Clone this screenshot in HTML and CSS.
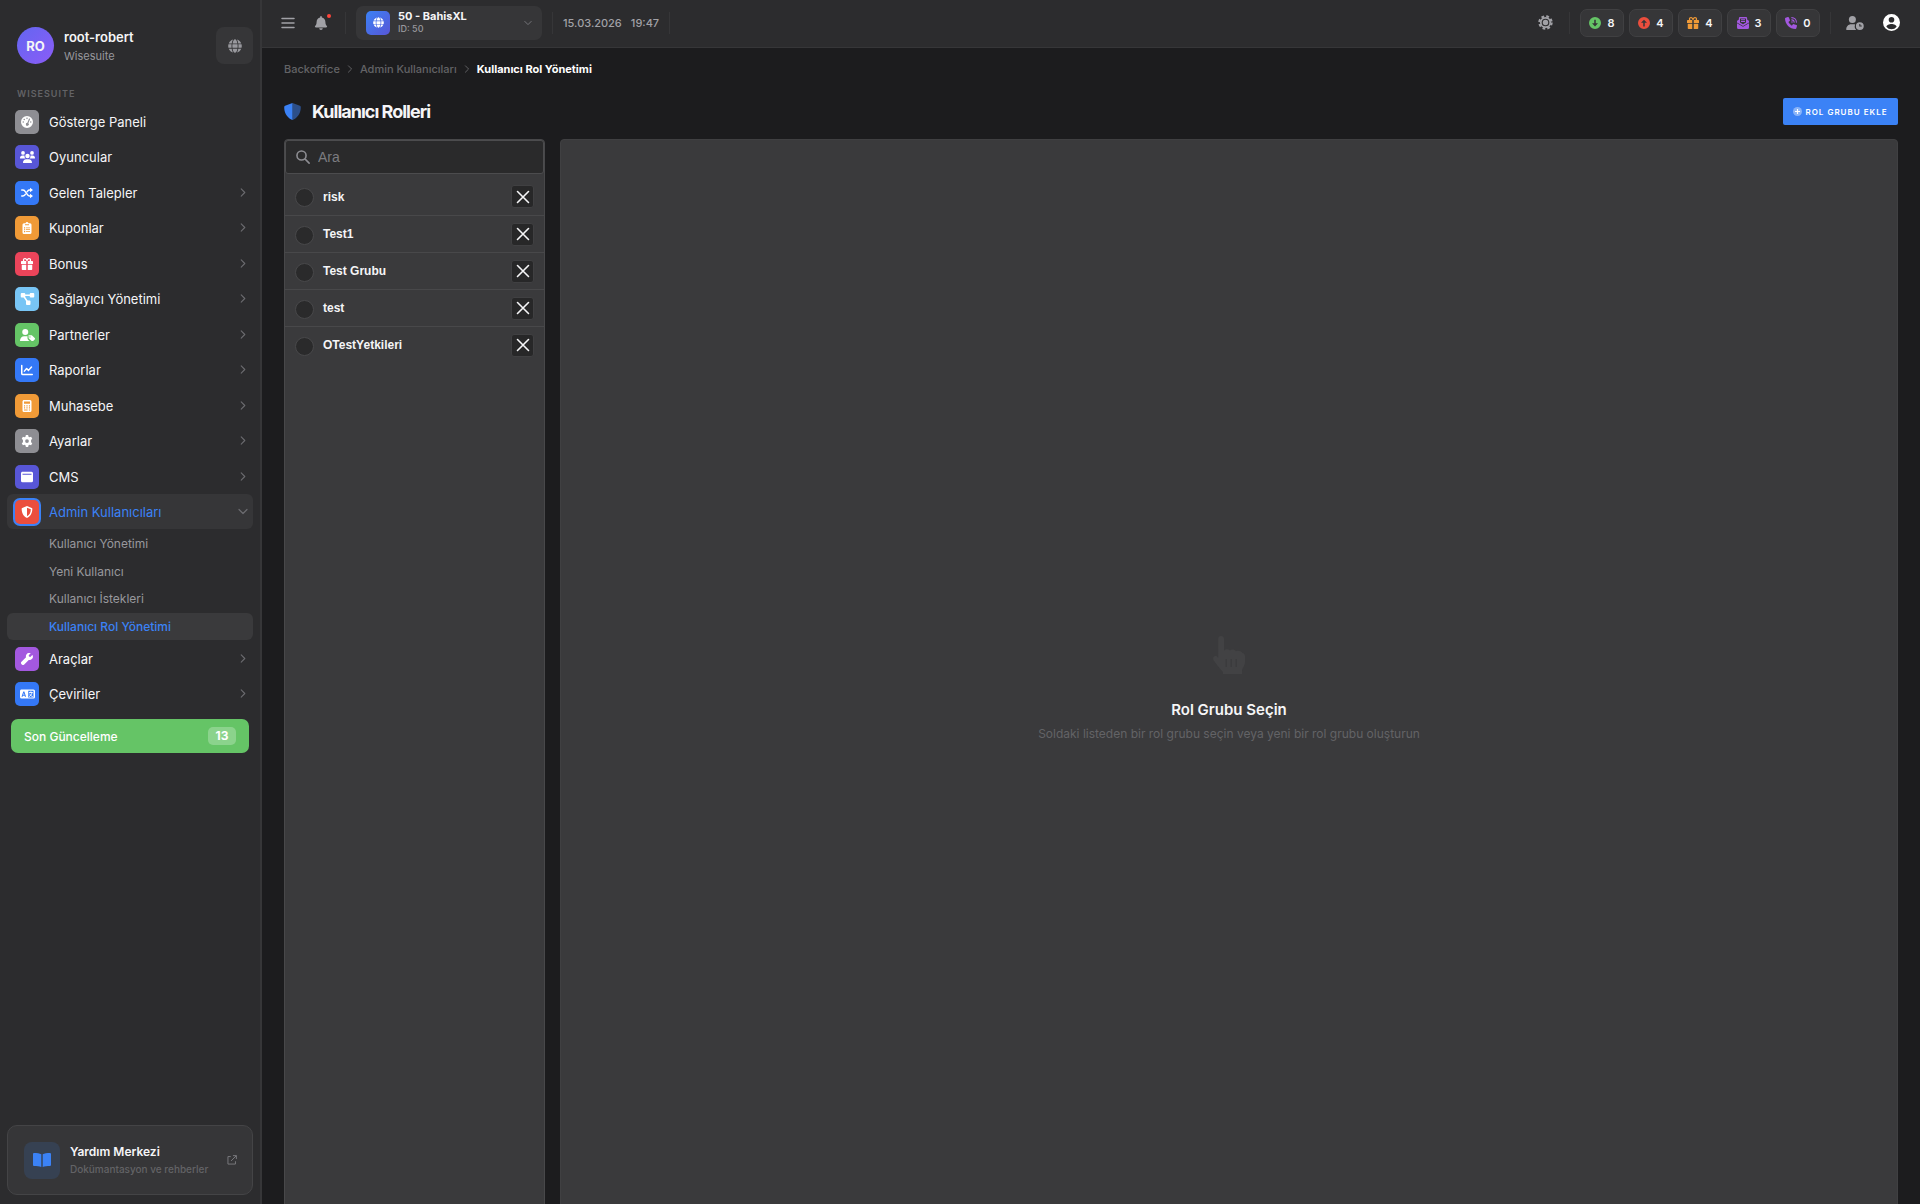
FILE: index.html
```html
<!DOCTYPE html>
<html lang="tr">
<head>
    <meta charset="UTF-8">
    <meta name="viewport" content="width=device-width, initial-scale=1.0">
    <title>Kullanıcı Rol Yönetimi</title>
    <link rel="stylesheet" href="styles.css">
</head>
<body>
    <!-- Icon sprite -->
    <svg class="sprite" aria-hidden="true">
        <symbol id="i-globe" viewBox="0 0 496 512"><path d="M336.5 160C322 70.7 287.8 8 248 8s-74 62.7-88.5 152h177zM152 256c0 22.2 1.2 43.5 3.3 64h185.3c2.1-20.5 3.3-41.8 3.3-64s-1.2-43.5-3.3-64H155.3c-2.1 20.5-3.3 41.8-3.3 64zm324.7-96c-28.6-67.9-86.5-120.4-158-141.6 24.4 33.8 41.2 84.7 50 141.6h108zM177.2 18.4C105.8 39.6 47.8 92.1 19.3 160h108c8.7-56.9 25.5-107.8 49.9-141.6zM487.4 192H372.7c2.1 21 3.3 42.5 3.3 64s-1.2 43-3.3 64h114.6c5.5-20.5 8.6-41.8 8.6-64s-3.1-43.5-8.5-64zM120 256c0-21.5 1.2-43 3.3-64H8.6C3.2 212.5 0 233.8 0 256s3.2 43.5 8.6 64h114.6c-2-21-3.2-42.5-3.2-64zm39.5 96c14.5 89.3 48.7 152 88.5 152s74-62.7 88.5-152h-177zm159.3 141.6c71.4-21.2 129.4-73.7 158-141.6h-108c-8.8 56.9-25.6 107.8-50 141.6zM19.3 352c28.6 67.9 86.5 120.4 158 141.6-24.4-33.8-41.2-84.7-50-141.6h-108z"/></symbol>
        <symbol id="i-bell" viewBox="0 0 448 512"><path d="M224 512c35.32 0 63.97-28.65 63.97-64H160.03c0 35.35 28.65 64 63.97 64zm215.39-149.71c-19.32-20.76-55.47-51.99-55.47-154.29 0-77.7-54.48-139.9-127.94-155.16V32c0-17.67-14.32-32-31.98-32s-31.98 14.33-31.98 32v20.84C118.56 68.1 64.08 130.3 64.08 208c0 102.3-36.15 133.53-55.47 154.29-6 6.45-8.66 14.16-8.61 21.71.11 16.4 12.98 32 32.1 32h383.8c19.12 0 32-15.6 32.1-32 .05-7.55-2.61-15.27-8.61-21.71z"/></symbol>
        <symbol id="i-gauge" viewBox="0 0 16 16"><path fill-rule="evenodd" d="M8 0a8 8 0 1 1 0 16A8 8 0 0 1 8 0zM8 2a1 1 0 1 0 0 2 1 1 0 0 0 0-2zM4.300 3.600a1 1 0 1 0 0 2 1 1 0 0 0 0-2zM3 7a1 1 0 1 0 0 2 1 1 0 0 0 0-2zM13 7a1 1 0 1 0 0 2 1 1 0 0 0 0-2zM10.600 3.700 8.500 9.100a2 2 0 1 0 1.300.5L12 4.300a.7.7 0 0 0-1.400-.6z"/></symbol>
        <symbol id="i-users" viewBox="0 0 20 16"><circle cx="4" cy="2.500" r="2.500"/><circle cx="16" cy="2.500" r="2.500"/><circle cx="10" cy="6.500" r="3"/><path d="M0 9.300C0 7.400 1.300 6 3 6h2c.4 0 .8.100 1.100.2A4 4 0 0 0 7.300 10H.7a.7.7 0 0 1-.7-.7zM20 9.300C20 7.400 18.700 6 17 6h-2c-.4 0-.8.100-1.100.2A4 4 0 0 1 12.700 10h6.600c.4 0 .7-.3.7-.7zM4 15.200C4 12.900 5.800 11 8.200 11h3.600c2.400 0 4.200 1.900 4.200 4.200 0 .5-.4.800-.8.800H4.800c-.4 0-.8-.3-.8-.8z"/></symbol>
        <symbol id="i-shuffle" viewBox="0 0 16 16"><path fill="none" stroke="currentColor" stroke-width="2" stroke-linecap="round" d="M1 4h1.500c1.200 0 2 .500 2.700 1.500l3.600 5C9.500 11.500 10.300 12 11.500 12H13M1 12h1.500c1.200 0 2-.5 2.700-1.500l.5-.7M8.300 6.200l.5-.7C9.500 4.500 10.300 4 11.500 4H13"/><path d="M12 1l4 3-4 3zM12 9l4 3-4 3z"/></symbol>
        <symbol id="i-clipboard" viewBox="0 0 12 16"><path fill-rule="evenodd" d="M6 0a2 2 0 0 1 1.900 1.500H10A2 2 0 0 1 12 3.500V14a2 2 0 0 1-2 2H2a2 2 0 0 1-2-2V3.500a2 2 0 0 1 2-2h2.100A2 2 0 0 1 6 0zM3.300 3v1.300h5.400V3zM2 7v1.500h1.500V7zm2.500.2v1H10v-1zM2 9.500V11h1.500V9.500zm2.500.3v1H10v-1zM2 12v1.500h1.500V12zm2.500.3v1H10v-1z"/></symbol>
        <symbol id="i-gift" viewBox="0 0 16 16"><path fill-rule="evenodd" d="M2.700 4H1a1 1 0 0 0-1 1v3h7V4h2v4h7V5a1 1 0 0 0-1-1h-1.700c.2-.4.200-.8.200-1.200C13.500 1.200 12.300 0 10.700 0 9.600 0 8.700.6 8 1.600 7.300.6 6.400 0 5.300 0 3.700 0 2.500 1.200 2.500 2.800c0 .4 0 .8.200 1.200zM5.400 1.500c.8 0 1.300.6 2 2.500H5.200C4.500 4 4 3.500 4 2.800s.6-1.300 1.400-1.300zm5.200 0c.8 0 1.400.6 1.400 1.300S11.500 4 10.800 4H8.600c.7-1.900 1.200-2.500 2-2.500zM1 9v6a1 1 0 0 0 1 1h5V9zm8 0v7h5a1 1 0 0 0 1-1V9z"/></symbol>
        <symbol id="i-nodes" viewBox="0 0 18 16"><rect width="6" height="6" rx="1.200"/><rect x="12" width="6" height="6" rx="1.200"/><rect x="7" y="10" width="6" height="6" rx="1.200"/><path fill="none" stroke="currentColor" stroke-width="2" d="M4 3h10M4.500 5l4 6"/></symbol>
        <symbol id="i-user-tag" viewBox="0 0 20 16"><circle cx="7" cy="4" r="4"/><path d="M0 15.300C0 12 2.500 9.500 5.500 9.500h3c.5 0 1 .1 1.500.2v2.500c0 .8.300 1.500.8 2l1.800 1.800H.7a.7.7 0 0 1-.7-.7z"/><path fill-rule="evenodd" d="M11 8.200h4c.4 0 .8.200 1.100.4l3.500 3.500c.6.600.6 1.400 0 2L17.500 16c-.6.600-1.400.6-2 0L12 12.600c-.3-.3-.5-.7-.5-1.100V9zM13.300 9.700a.8.8 0 1 0 0 1.600.8.8 0 0 0 0-1.600z"/></symbol>
        <symbol id="i-user-clock" viewBox="0 0 20 16"><circle cx="7" cy="4" r="4"/><path d="M0 15.300C0 12 2.500 9.500 5.500 9.500h3c.6 0 1.200.1 1.700.3a5.500 5.500 0 0 0 1.300 6.200H.7a.7.7 0 0 1-.7-.7z"/><path fill-rule="evenodd" d="M15.500 7a4.500 4.500 0 1 1 0 9 4.500 4.500 0 0 1 0-9zm-.6 2v3h2.800v-1.100h-1.600V9z"/></symbol>
        <symbol id="i-chart" viewBox="0 0 16 16"><path fill="none" stroke="currentColor" stroke-width="2" stroke-linecap="round" stroke-linejoin="round" d="M1 2v10.500c0 .8.700 1.500 1.500 1.500H15M4.500 9.500l3-3.500 2.500 2.500L14 4"/></symbol>
        <symbol id="i-calc" viewBox="0 0 12 16"><path fill-rule="evenodd" d="M2 0h8a2 2 0 0 1 2 2v12a2 2 0 0 1-2 2H2a2 2 0 0 1-2-2V2C0 .9.900 0 2 0zm0 2v3h8V2zM2 7v1.500h1.500V7zm3.200 0v1.500h1.600V7zm3.300 0v1.500H10V7zM2 9.800v1.500h1.500V9.800zm3.200 0v1.500h1.600V9.800zm3.300 0v1.500H10V9.800zM2 12.500V14h4.800v-1.500zm6.500 0V14H10v-1.500z"/></symbol>
        <symbol id="i-gear" viewBox="0 0 16 16"><path fill-rule="evenodd" d="M6.500 0h3l.5 2.200 1.300.8 2.200-.7 1.500 2.600-1.600 1.600v3l1.600 1.600-1.500 2.600-2.200-.7-1.300.8-.5 2.200h-3L6 13.800 4.700 13l-2.200.7L1 11.100l1.600-1.600v-3L1 4.900l1.500-2.600 2.200.7L6 2.200zM8 5.500a2.500 2.500 0 1 0 0 5 2.500 2.500 0 0 0 0-5z"/></symbol>
        <symbol id="i-window" viewBox="0 0 16 16"><path fill-rule="evenodd" d="M2 1h12a2 2 0 0 1 2 2v10a2 2 0 0 1-2 2H2a2 2 0 0 1-2-2V3c0-1.100.900-2 2-2zm0 2.500V5h12V3.500z"/></symbol>
        <symbol id="i-shield" viewBox="0 0 16 16"><path fill-rule="evenodd" d="M8 0l6.300 2.500c.5.200.8.700.8 1.200 0 4.600-1.500 9.500-6.500 12.100-.4.200-.8.200-1.200 0C2.400 13.200.9 8.300.9 3.700c0-.5.300-1 .8-1.200zM8 2.200v11.600c3.600-2 5-5.600 5.100-9.600z"/></symbol>
        <symbol id="i-wrench" viewBox="0 0 16 16"><path d="M15.600 3.200a.5.5 0 0 0-.9-.2L12.500 5.200 10.600 4.800 10.300 3l2.300-2.200a.5.5 0 0 0-.3-.8 4.600 4.600 0 0 0-5.600 5.800L.7 11.700a2.200 2.200 0 0 0 0 3.200l.4.400a2.200 2.200 0 0 0 3.200 0l6-6a4.600 4.600 0 0 0 5.300-6.100z"/></symbol>
        <symbol id="i-language" viewBox="0 0 20 16"><path fill-rule="evenodd" d="M2 2h16a2 2 0 0 1 2 2v8a2 2 0 0 1-2 2H2a2 2 0 0 1-2-2V4c0-1.100.900-2 2-2zm9 1.500v9h7v-9zM4.400 4.800 2 11.500h1.500l.4-1.300h2.300l.4 1.300h1.500L5.800 4.800zm.7 1.800.8 2.300H4.300z"/><path fill="none" stroke="currentColor" stroke-width="1.200" d="M12 6h5M14.500 4.500V6M16 6c-.5 2.500-2 4.500-4 5.500M13 7.500c.7 2 2 3.500 4 4"/></symbol>
        <symbol id="i-book" viewBox="0 0 18 14"><path d="M8.300 1.200C6.800.4 4 0 .9 0 .4 0 0 .4 0 .9v11.200c0 .5.400.9.900.9 3 0 5.600.2 7.400 1zM9.700 1.200C11.200.4 14 0 17.100 0c.5 0 .9.400.9.900v11.200c0 .5-.4.900-.9.900-3 0-5.600.2-7.400 1z"/></symbol>
        <symbol id="i-external" viewBox="0 0 16 16"><path fill="none" stroke="currentColor" stroke-width="1.600" d="M6 2.500H1.500v12h12V10M9.500 1H15v5.500M15 1 6.500 9.500"/></symbol>
        <symbol id="i-menu" viewBox="0 0 14 12"><path fill="none" stroke="currentColor" stroke-width="1.500" stroke-linecap="round" d="M1 1.500h12M1 6h12M1 10.500h12"/></symbol>
        <symbol id="i-right" viewBox="0 0 6 10"><path fill="none" stroke="currentColor" stroke-width="1.200" stroke-linecap="round" stroke-linejoin="round" d="M1 1l4 4-4 4"/></symbol>
        <symbol id="i-down" viewBox="0 0 10 6"><path fill="none" stroke="currentColor" stroke-width="1.200" stroke-linecap="round" stroke-linejoin="round" d="M1 1l4 4 4-4"/></symbol>
        <symbol id="i-sun" viewBox="0 0 16 16"><circle cx="8" cy="8" r="6.500" fill="none" stroke="currentColor" stroke-width="2.400" stroke-dasharray="2.900 2.205"/><circle cx="8" cy="8" r="5" fill="none" stroke="currentColor" stroke-width="1.800"/><circle cx="8" cy="8" r="2.900"/></symbol>
        <symbol id="i-circle-down" viewBox="0 0 16 16"><path fill-rule="evenodd" d="M8 0a8 8 0 1 1 0 16A8 8 0 0 1 8 0zM7 3.500v4.800H4l4 4.200 4-4.200H9V3.500z"/></symbol>
        <symbol id="i-circle-up" viewBox="0 0 16 16"><path fill-rule="evenodd" d="M8 0a8 8 0 1 1 0 16A8 8 0 0 1 8 0zM7 12.500V7.700H4l4-4.200 4 4.200H9v4.800z"/></symbol>
        <symbol id="i-mail" viewBox="0 0 16 16"><path fill-rule="evenodd" d="M4 0h8a1.500 1.500 0 0 1 1.500 1.500v1.700L15.400 4.500c.4.300.6.700.6 1.200v1.500L8 12 0 7.200v-1.500c0-.5.200-.9.600-1.200l1.900-1.300V1.500A1.500 1.500 0 0 1 4 0zm0 2v5.200L8 9.600l4-2.400V2zm1.300 1h5.400v1.200H5.300zm0 2.300h5.400v1.200H5.300z"/><path d="M0 8.200l8 4.900 8-4.900V14a2 2 0 0 1-2 2H2a2 2 0 0 1-2-2z"/></symbol>
        <symbol id="i-phone" viewBox="0 0 16 16"><path d="M5.200.8a1.200 1.200 0 0 0-1.500-.7L.9.900C.4 1 0 1.500 0 2c0 7.700 6.300 14 14 14 .5 0 1-.4 1.100-.9l.8-2.800a1.200 1.200 0 0 0-.7-1.500l-3.300-1.300a1.200 1.200 0 0 0-1.400.3L9.200 11.500A10.500 10.500 0 0 1 4.500 6.800l1.700-1.400c.4-.3.500-.9.300-1.300z"/><path fill="none" stroke="currentColor" stroke-width="1.400" stroke-linecap="round" d="M9 .8A6.200 6.200 0 0 1 15.200 7M9 3.800A3.200 3.200 0 0 1 12.200 7"/><circle cx="9.300" cy="6.700" r="1"/></symbol>
        <symbol id="i-account" viewBox="0 0 20 20"><path fill-rule="evenodd" d="M10 0a10 10 0 1 1 0 20 10 10 0 0 1 0-20zm0 3.500a3.300 3.300 0 1 0 0 6.600 3.300 3.300 0 0 0 0-6.600zM10 11.800c-2.800 0-6 1.500-6 3.200a7.500 7.500 0 0 0 12 0c0-1.700-3.200-3.200-6-3.200z"/></symbol>
        <symbol id="i-duo-shield" viewBox="0 0 16 16"><path d="M8 0v16c-.2 0-.4 0-.6-.2C2 13 .2 8.500.2 3.700c0-.5.300-1 .8-1.200z"/><path opacity=".5" d="M8 0v16c.2 0 .4 0 .6-.2 5.400-2.800 7.200-7.300 7.200-12.100 0-.5-.3-1-.8-1.200z"/></symbol>
        <symbol id="i-plus" viewBox="0 0 16 16"><circle cx="8" cy="8" r="8" opacity=".4"/><path d="M7 3.500h2V7h3.500v2H9v3.500H7V9H3.500V7H7z"/></symbol>
        <symbol id="i-search" viewBox="0 0 16 16"><path fill="none" stroke="currentColor" stroke-width="1.800" stroke-linecap="round" d="M10.200 10.200 15 15M11.500 6.300a5.200 5.200 0 1 1-10.400 0 5.200 5.200 0 0 1 10.400 0z"/></symbol>
        <symbol id="i-close" viewBox="0 0 14 14"><path fill="none" stroke="currentColor" stroke-width="1.600" stroke-linecap="round" d="M1.500 1.500l11 11M12.500 1.500l-11 11"/></symbol>
        <symbol id="i-hand" viewBox="0 0 32 38"><path fill-rule="evenodd" d="M8 0c1.800 0 3 1.300 3 3v12c1-2 4-2.500 6-.5 1.600-1.600 4.500-1.400 6 .8 2-1 5-.3 6.500 1.700 1.600.3 2.500 1.500 2.500 3.500V26c0 4-3 6-3 9v3H10v-2c-3-3-6-7-9.300-11.500C-.8 22 1 19 4 20.500L5.200 22V3C5.200 1.300 6.300 0 8 0zm4.500 23v8h1.300v-8zm5 0v8h1.300v-8zm5 0v8h1.300v-8z"/></symbol>
    </svg>

    <div class="layout">
        <aside class="sidebar">
            <div class="profile">
                <div class="avatar">RO</div>
                <div class="profile-text">
                    <strong>root-robert</strong>
                    <span>Wisesuite</span>
                </div>
                <button type="button" class="lang-btn" aria-label="Dil"><svg width="14" height="14"><use href="#i-globe"/></svg></button>
            </div>

            <div class="nav-title">WISESUITE</div>
            <nav>
                <ul class="nav">
                    <li><a href="#"><span class="nav-icon gray"><svg><use href="#i-gauge"/></svg></span>Gösterge Paneli</a></li>
                    <li><a href="#"><span class="nav-icon indigo"><svg class="wide"><use href="#i-users"/></svg></span>Oyuncular</a></li>
                    <li><a href="#"><span class="nav-icon blue"><svg><use href="#i-shuffle"/></svg></span>Gelen Talepler<svg class="arrow"><use href="#i-right"/></svg></a></li>
                    <li><a href="#"><span class="nav-icon orange"><svg><use href="#i-clipboard"/></svg></span>Kuponlar<svg class="arrow"><use href="#i-right"/></svg></a></li>
                    <li><a href="#"><span class="nav-icon pink"><svg><use href="#i-gift"/></svg></span>Bonus<svg class="arrow"><use href="#i-right"/></svg></a></li>
                    <li><a href="#"><span class="nav-icon sky"><svg class="wide"><use href="#i-nodes"/></svg></span>Sağlayıcı Yönetimi<svg class="arrow"><use href="#i-right"/></svg></a></li>
                    <li><a href="#"><span class="nav-icon green"><svg class="wide"><use href="#i-user-tag"/></svg></span>Partnerler<svg class="arrow"><use href="#i-right"/></svg></a></li>
                    <li><a href="#"><span class="nav-icon blue"><svg><use href="#i-chart"/></svg></span>Raporlar<svg class="arrow"><use href="#i-right"/></svg></a></li>
                    <li><a href="#"><span class="nav-icon orange"><svg><use href="#i-calc"/></svg></span>Muhasebe<svg class="arrow"><use href="#i-right"/></svg></a></li>
                    <li><a href="#"><span class="nav-icon gray"><svg><use href="#i-gear"/></svg></span>Ayarlar<svg class="arrow"><use href="#i-right"/></svg></a></li>
                    <li><a href="#"><span class="nav-icon indigo"><svg><use href="#i-window"/></svg></span>CMS<svg class="arrow"><use href="#i-right"/></svg></a></li>
                    <li>
                        <a href="#" class="active"><span class="nav-icon red"><svg><use href="#i-shield"/></svg></span>Admin Kullanıcıları<svg class="arrow"><use href="#i-down"/></svg></a>
                        <ul class="subnav">
                            <li><a href="#">Kullanıcı Yönetimi</a></li>
                            <li><a href="#">Yeni Kullanıcı</a></li>
                            <li><a href="#">Kullanıcı İstekleri</a></li>
                            <li><a href="#" class="current">Kullanıcı Rol Yönetimi</a></li>
                        </ul>
                    </li>
                    <li><a href="#"><span class="nav-icon purple"><svg><use href="#i-wrench"/></svg></span>Araçlar<svg class="arrow"><use href="#i-right"/></svg></a></li>
                    <li><a href="#"><span class="nav-icon blue"><svg class="wide"><use href="#i-language"/></svg></span>Çeviriler<svg class="arrow"><use href="#i-right"/></svg></a></li>
                </ul>
            </nav>
            <button type="button" class="update-btn">Son Güncelleme <span>13</span></button>

            <a href="#" class="help-card">
                <span class="help-icon"><svg width="20" height="14"><use href="#i-book"/></svg></span>
                <span class="help-text">
                    <strong>Yardım Merkezi</strong>
                    <small>Dokümantasyon ve rehberler</small>
                </span>
                <svg width="10" height="10"><use href="#i-external"/></svg>
            </a>
        </aside>

        <div class="content">
            <header class="topbar">
                <button type="button" class="icon-btn" aria-label="Menü"><svg width="14" height="12"><use href="#i-menu"/></svg></button>
                <button type="button" class="icon-btn bell" aria-label="Bildirimler"><svg width="14" height="14"><use href="#i-bell"/></svg></button>
                <span class="divider"></span>
                <button type="button" class="site-select" aria-haspopup="listbox">
                    <span class="site-icon"><svg width="11" height="11"><use href="#i-globe"/></svg></span>
                    <span class="site-text">
                        <strong>50 - BahisXL</strong>
                        <small>ID: 50</small>
                    </span>
                    <svg width="8" height="6"><use href="#i-down"/></svg>
                </button>
                <span class="divider"></span>
                <div class="clock"><span>15.03.2026</span><span>19:47</span></div>
                <span class="divider"></span>

                <div class="topbar-right">
                    <button type="button" class="icon-btn" aria-label="Tema"><svg width="15" height="15"><use href="#i-sun"/></svg></button>
                    <span class="divider"></span>
                    <div class="counters">
                        <button type="button" class="counter"><svg class="c-green"><use href="#i-circle-down"/></svg>8</button>
                        <button type="button" class="counter"><svg class="c-red"><use href="#i-circle-up"/></svg>4</button>
                        <button type="button" class="counter"><svg class="c-orange"><use href="#i-gift"/></svg>4</button>
                        <button type="button" class="counter"><svg class="c-purple"><use href="#i-mail"/></svg>3</button>
                        <button type="button" class="counter"><svg class="c-purple"><use href="#i-phone"/></svg>0</button>
                    </div>
                    <span class="divider"></span>
                    <button type="button" class="icon-btn" aria-label="Oturumlar"><svg width="18" height="14"><use href="#i-user-clock"/></svg></button>
                    <button type="button" class="icon-btn account" aria-label="Hesap"><svg width="17" height="17"><use href="#i-account"/></svg></button>
                </div>
            </header>

            <main class="page">
                <nav class="breadcrumb">
                    <a href="#">Backoffice</a>
                    <svg width="6" height="8"><use href="#i-right"/></svg>
                    <a href="#">Admin Kullanıcıları</a>
                    <svg width="6" height="8"><use href="#i-right"/></svg>
                    <span>Kullanıcı Rol Yönetimi</span>
                </nav>

                <div class="page-head">
                    <svg width="17" height="17"><use href="#i-duo-shield"/></svg>
                    <h1>Kullanıcı Rolleri</h1>
                    <button type="button" class="add-btn"><svg width="9" height="9"><use href="#i-plus"/></svg>ROL GRUBU EKLE</button>
                </div>

                <div class="panels">
                    <section class="role-list">
                        <label class="search">
                            <svg width="14" height="14"><use href="#i-search"/></svg>
                            <input type="text" placeholder="Ara" aria-label="Ara">
                        </label>
                        <ul>
                            <li><input type="radio" name="role" id="role1"><label for="role1">risk</label><button type="button" aria-label="Sil"><svg width="14" height="14"><use href="#i-close"/></svg></button></li>
                            <li><input type="radio" name="role" id="role2"><label for="role2">Test1</label><button type="button" aria-label="Sil"><svg width="14" height="14"><use href="#i-close"/></svg></button></li>
                            <li><input type="radio" name="role" id="role3"><label for="role3">Test Grubu</label><button type="button" aria-label="Sil"><svg width="14" height="14"><use href="#i-close"/></svg></button></li>
                            <li><input type="radio" name="role" id="role4"><label for="role4">test</label><button type="button" aria-label="Sil"><svg width="14" height="14"><use href="#i-close"/></svg></button></li>
                            <li><input type="radio" name="role" id="role5"><label for="role5">OTestYetkileri</label><button type="button" aria-label="Sil"><svg width="14" height="14"><use href="#i-close"/></svg></button></li>
                        </ul>
                    </section>

                    <section class="role-detail">
                        <svg width="32" height="38"><use href="#i-hand"/></svg>
                        <h2>Rol Grubu Seçin</h2>
                        <p>Soldaki listeden bir rol grubu seçin veya yeni bir rol grubu oluşturun</p>
                    </section>
                </div>
            </main>
        </div>
    </div>
</body>
</html>
```

FILE: styles.css
```css
* {
    margin: 0;
    padding: 0;
    box-sizing: border-box;
}

body {
    font-family: Inter, "Liberation Sans", sans-serif;
    font-size: 13px;
    background: #1c1c1e;
    color: #f5f5f7;
}

ul {
    list-style: none;
}

a {
    color: inherit;
    text-decoration: none;
}

button,
input {
    font-family: inherit;
    color: inherit;
    border: none;
    background: none;
}

button {
    cursor: pointer;
}

svg {
    display: block;
    flex-shrink: 0;
    fill: currentColor;
}

.sprite {
    display: none;
}

.layout {
    display: flex;
    height: 100vh;
    overflow: hidden;
}

/* Sidebar */
.sidebar {
    display: flex;
    flex-direction: column;
    flex-shrink: 0;
    width: 262px;
    padding: 27px 7px 9px;
    background: #2c2c2e;
    border-right: 2px solid #363638;
}

.profile {
    display: flex;
    align-items: center;
    gap: 10px;
    padding-left: 10px;
}

.avatar {
    display: flex;
    align-items: center;
    justify-content: center;
    width: 37px;
    height: 37px;
    border-radius: 50%;
    background: linear-gradient(135deg, #6366f1, #8b5cf6);
    font-size: 13px;
    font-weight: 700;
}

.profile-text {
    display: flex;
    flex-direction: column;
    gap: 2px;
    flex: 1;
    padding-top: 2px;
}

.profile-text strong {
    font-size: 13px;
    font-weight: 600;
    line-height: 17px;
}

.profile-text span {
    font-size: 11px;
    line-height: 16px;
    color: #98989d;
}

.lang-btn {
    display: flex;
    align-items: center;
    justify-content: center;
    width: 37px;
    height: 37px;
    border-radius: 8px;
    background: #363638;
    color: #98989d;
}

.nav-title {
    margin-top: 22px;
    padding-left: 10px;
    font-size: 9px;
    font-weight: 600;
    line-height: 15px;
    letter-spacing: 1px;
    color: #636366;
}

.nav {
    margin-top: 3px;
}

.nav > li:nth-child(even) {
    padding-bottom: 1px;
}

.nav > li > a {
    display: flex;
    align-items: center;
    gap: 10px;
    height: 35px;
    padding: 0 5px 0 8px;
    border-radius: 6px;
    font-size: 13px;
}

.nav > li > a.active {
    background: #363638;
    color: #3b82f6;
}

.nav-icon {
    display: flex;
    align-items: center;
    justify-content: center;
    width: 24px;
    height: 24px;
    border-radius: 5px;
    color: #fff;
}

.nav-icon svg {
    width: 12px;
    height: 12px;
}

.nav-icon svg.wide {
    width: 15px;
}

.active .nav-icon {
    box-shadow: 0 0 0 2px #3b82f6;
}

.gray { background: #8e8e93; }
.indigo { background: #5856d6; }
.blue { background: #3478f6; }
.orange { background: #f09a37; }
.pink { background: #eb445a; }
.sky { background: #78c5f5; }
.green { background: #65c466; }
.red { background: #eb4e3d; }
.purple { background: #a358df; }

.arrow {
    width: 10px;
    height: 9px;
    margin-left: auto;
    color: #6c6c70;
}

.subnav {
    padding-top: 1px;
}

.subnav li:nth-child(odd) {
    padding-bottom: 1px;
}

.subnav a {
    display: block;
    padding-left: 42px;
    border-radius: 6px;
    font-size: 12px;
    line-height: 27px;
    color: #98989d;
}

.subnav a.current {
    background: #3a3a3c;
    font-weight: 500;
    color: #3b82f6;
}

.update-btn {
    display: flex;
    align-items: center;
    justify-content: space-between;
    height: 34px;
    margin: 7px 4px 0;
    padding: 0 13px;
    border-radius: 7px;
    background: #65c466;
    font-size: 12px;
    font-weight: 500;
    color: #fff;
}

.update-btn span {
    width: 28px;
    border-radius: 5px;
    background: rgba(255, 255, 255, 0.25);
    font-size: 12px;
    font-weight: 700;
    line-height: 18px;
}

.help-card {
    display: flex;
    align-items: center;
    height: 70px;
    margin-top: auto;
    padding: 0 15px 0 16px;
    border: 1px solid #444446;
    border-radius: 10px;
    background: #363638;
    color: #77777b;
}

.help-icon {
    display: flex;
    align-items: center;
    justify-content: center;
    width: 36px;
    height: 37px;
    border-radius: 8px;
    background: #364152;
    color: #3b82f6;
}

.help-text {
    display: flex;
    flex-direction: column;
    flex: 1;
    padding-left: 10px;
}

.help-text strong {
    font-size: 12px;
    font-weight: 600;
    line-height: 19px;
    color: #f5f5f7;
}

.help-text small {
    font-size: 10px;
    font-weight: 500;
    line-height: 17px;
    color: #636366;
}

/* Topbar */
.content {
    display: flex;
    flex-direction: column;
    flex: 1;
    min-width: 0;
}

.topbar {
    display: flex;
    align-items: center;
    flex-shrink: 0;
    height: 48px;
    padding: 0 15px 2px 12px;
    background: #2c2c2e;
    border-bottom: 1px solid #363638;
}

.icon-btn {
    display: flex;
    align-items: center;
    justify-content: center;
    width: 28px;
    height: 28px;
    color: #a1a1a6;
}

.bell {
    position: relative;
    margin-left: 5px;
}

.bell::after {
    content: "";
    position: absolute;
    top: 5px;
    right: 4px;
    width: 4px;
    height: 4px;
    border-radius: 50%;
    background: #ff453a;
}

.divider {
    width: 1px;
    height: 22px;
    margin: 0 10px;
    background: #363638;
}

.site-select {
    display: flex;
    align-items: center;
    gap: 8px;
    width: 186px;
    height: 34px;
    padding: 0 10px;
    border-radius: 7px;
    background: #363638;
    text-align: left;
    color: #77777b;
}

.site-icon {
    display: flex;
    align-items: center;
    justify-content: center;
    width: 24px;
    height: 24px;
    border-radius: 5px;
    background: linear-gradient(135deg, #3b82f6, #5856d6);
    color: #fff;
}

.site-text {
    display: flex;
    flex-direction: column;
    flex: 1;
}

.site-text strong {
    font-size: 11px;
    font-weight: 700;
    line-height: 13px;
    color: #f5f5f7;
}

.site-text small {
    font-size: 9px;
    font-weight: 500;
    line-height: 12px;
    color: #98989d;
}

.clock {
    display: flex;
    gap: 9px;
    font-size: 11px;
    font-weight: 500;
    color: #a1a1a6;
}

.topbar-right {
    display: flex;
    align-items: center;
    margin-left: auto;
}

.counters {
    display: flex;
    gap: 5px;
}

.counter {
    display: flex;
    align-items: center;
    justify-content: center;
    gap: 6px;
    width: 44px;
    height: 28px;
    border: 1px solid #404042;
    border-radius: 7px;
    background: #363638;
    font-size: 11px;
    font-weight: 600;
}

.counter svg {
    width: 12px;
    height: 12px;
}

.c-green { color: #65c466; }
.c-red { color: #eb4e3d; }
.c-orange { color: #f09a37; }
.c-purple { color: #a358df; }

.account {
    margin-left: 8px;
    color: #fff;
}

/* Page */
.page {
    padding: 12px 22px 0;
}

.breadcrumb {
    display: flex;
    align-items: center;
    gap: 7px;
    font-size: 11px;
    font-weight: 500;
    line-height: 18px;
    color: #636366;
}

.breadcrumb span {
    font-weight: 700;
    color: #fff;
}

.page-head {
    display: flex;
    align-items: center;
    gap: 11px;
    margin: 20px 0 14px;
    color: #3b82f6;
}

.page-head h1 {
    flex: 1;
    font-size: 18px;
    font-weight: 700;
    line-height: 20px;
    letter-spacing: -1px;
    color: #f5f5f7;
}

.add-btn {
    display: flex;
    align-items: center;
    justify-content: center;
    gap: 3px;
    width: 115px;
    height: 27px;
    border-radius: 2px;
    background: #3b82f6;
    font-size: 8px;
    font-weight: 600;
    letter-spacing: 1px;
    color: #fff;
}

.panels {
    display: flex;
    gap: 15px;
    height: calc(100vh - 103px);
}

.role-list,
.role-detail {
    background: #3a3a3c;
    border: 1px solid #48484a;
    border-radius: 4px;
}

.role-list {
    flex-shrink: 0;
    width: 261px;
}

.search {
    display: flex;
    align-items: center;
    gap: 8px;
    height: 34px;
    padding: 0 10px;
    border: 1px solid #4c4c4e;
    border-radius: 3px;
    background: #2a2a2b;
    color: #8e8e93;
}

.search input {
    flex: 1;
    min-width: 0;
    outline: none;
    font-family: "Liberation Sans", sans-serif;
    font-size: 14px;
}

.search input::placeholder {
    color: #7c7c80;
}

.role-list ul {
    padding-top: 4px;
}

.role-list li {
    display: flex;
    align-items: center;
    height: 37px;
    padding: 0 10px;
}

.role-list li + li {
    border-top: 1px solid #48484a;
}

.role-list input[type="radio"] {
    appearance: none;
    width: 19px;
    height: 19px;
    margin-top: 2px;
    border: 1px solid #48484a;
    border-radius: 50%;
    background: #2a2a2b;
}

.role-list li label {
    flex: 1;
    padding-left: 9px;
    font-family: "Liberation Sans", sans-serif;
    font-size: 12px;
    font-weight: 700;
}

.role-list li button {
    display: flex;
    align-items: center;
    justify-content: center;
    width: 23px;
    height: 23px;
    border: 1px solid #404042;
    border-radius: 3px;
    background: #272728;
}

.role-detail {
    display: flex;
    flex-direction: column;
    align-items: center;
    justify-content: center;
    flex: 1;
    border-color: #404042;
    color: #424244;
}

.role-detail h2 {
    margin-top: 26px;
    font-size: 15px;
    font-weight: 600;
    line-height: 20px;
    color: #f5f5f7;
}

.role-detail p {
    margin-top: 4px;
    font-size: 12px;
    line-height: 20px;
    color: #636366;
}
```
